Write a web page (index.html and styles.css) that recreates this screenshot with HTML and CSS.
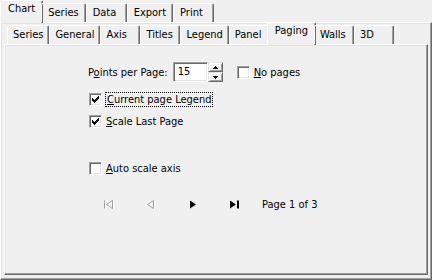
FILE: index.html
```html
<!DOCTYPE html>
<html lang="en">
<head>
  <meta charset="UTF-8">
  <title>Chart Editor - Paging</title>
  <link rel="stylesheet" href="styles.css">
</head>
<body>
  <div class="editor">
    <div class="tab-title outer">
      <span class="tab-item active">Chart</span>
      <span class="tab-item">Series</span>
      <span class="tab-item">Data</span>
      <span class="tab-item">Export</span>
      <span class="tab-item">Print</span>
    </div>
    <div class="panel outer-panel">
      <div class="tab-title inner">
        <span class="tab-item">Series</span>
        <span class="tab-item">General</span>
        <span class="tab-item">Axis</span>
        <span class="tab-item">Titles</span>
        <span class="tab-item">Legend</span>
        <span class="tab-item">Panel</span>
        <span class="tab-item active">Paging</span>
        <span class="tab-item">Walls</span>
        <span class="tab-item">3D</span>
      </div>
      <div class="panel inner-panel">
        <div class="row row-points">
          <span class="label">P<u>o</u>ints per Page:</span>
          <span class="edit">15</span>
          <span class="spin">
            <span class="spin-btn"><svg width="5" height="3" viewBox="0 0 5 3"><path d="M2 0h1v1h1v1h1v1H0V2h1V1h1z" fill="#000"/></svg></span>
            <span class="spin-btn"><svg width="5" height="3" viewBox="0 0 5 3"><path d="M0 0h5v1H4v1H3v1H2V2H1V1H0z" fill="#000"/></svg></span>
          </span>
          <label class="check no-pages"><span class="box"></span><span><u>N</u>o pages</span></label>
        </div>
        <label class="check row-legend"><span class="box checked"><svg width="7" height="7" viewBox="0 0 7 7"><path d="M0 2h1v1h1v1h1V3h1V2h1V1h1V0h1v3H6v1H5v1H4v1H3v1H2V6H1V5H0z" fill="#000"/></svg></span><span class="focus"><u>C</u>urrent page Legend</span></label>
        <label class="check row-scale"><span class="box checked"><svg width="7" height="7" viewBox="0 0 7 7"><path d="M0 2h1v1h1v1h1V3h1V2h1V1h1V0h1v3H6v1H5v1H4v1H3v1H2V6H1V5H0z" fill="#000"/></svg></span><span><u>S</u>cale Last Page</span></label>
        <label class="check row-auto"><span class="box"></span><span><u>A</u>uto scale axis</span></label>
        <div class="nav">
          <span class="nav-btn disabled">
            <svg width="11" height="9" viewBox="0 0 11 9"><path d="M1.5 0.5v8M9.5 0.5L3.5 4.5L9.5 8.5z" fill="none" stroke="#fff" transform="translate(1 1)"/><path d="M1.5 0.5v8M9.5 0.5L3.5 4.5L9.5 8.5z" fill="none" stroke="#a0a0a0"/></svg>
          </span>
          <span class="nav-btn disabled">
            <svg width="11" height="9" viewBox="0 0 11 9"><path d="M8.5 0.5L2.5 4.5L8.5 8.5z" fill="none" stroke="#fff" transform="translate(1 1)"/><path d="M8.5 0.5L2.5 4.5L8.5 8.5z" fill="none" stroke="#a0a0a0"/></svg>
          </span>
          <span class="nav-btn">
            <svg width="11" height="9" viewBox="0 0 11 9"><path d="M3 0.5L9 4.5L3 8.5z" fill="#000"/></svg>
          </span>
          <span class="nav-btn">
            <svg width="11" height="9" viewBox="0 0 11 9"><path d="M1 0.5L7 4.5L1 8.5z" fill="#000"/><rect x="8" y="0.5" width="2" height="8" fill="#000"/></svg>
          </span>
          <span class="page-info">Page 1 of 3</span>
        </div>
      </div>
    </div>
  </div>
</body>
</html>
```

FILE: styles.css
```css
body{
  margin: 0;
  background: #f0f0f0;
  font-family: "DejaVu Sans Condensed", Tahoma, "Liberation Sans", sans-serif;
  font-size: 11px;
  color: #000;
}
.editor{
  width: 432px;
  height: 280px;
  display: flex;
  flex-direction: column;
}

/* tabs */
.tab-title{
  position: relative;
  z-index: 1;
  display: flex;
  align-items: flex-end;
  height: 22px;
  padding-left: 2px;
}
.tab-title.inner{
  padding-left: 3px;
  height: 21px;
}
.tab-item{
  box-sizing: border-box;
  height: 19px;
  min-width: 41px;
  padding: 2px 6px 0 6px;
  border-top: 1px solid #fff;
  border-left: 1px solid #fff;
  border-right: 1px solid #696969;
  border-radius: 2px 2px 0 0;
  box-shadow: inset -1px 0 #a0a0a0;
  white-space: nowrap;
}
.inner .tab-item{
  min-width: 40px;
  padding-left: 5px;
  padding-right: 5px;
}
.tab-item.active,
.inner .tab-item.active{
  height: 23px;
  margin: 0 -2px -1px -2px;
  padding-top: 1px;
  padding-left: 7px;
  padding-right: 7px;
  background: #f0f0f0;
}

/* panels */
.panel{
  box-sizing: border-box;
  border-top: 1px solid #fff;
  border-left: 1px solid #fff;
  border-right: 1px solid #696969;
  border-bottom: 1px solid #696969;
  box-shadow: inset -1px -1px #a0a0a0, inset 1px 1px #e3e3e3;
}
.outer-panel{
  flex: 1;
  display: flex;
  flex-direction: column;
  padding: 0 3px 4px 3px;
}
.inner-panel{
  flex: 1;
  display: flex;
  flex-direction: column;
  padding: 17px 0 0 83px;
}

/* rows */
.row{
  display: flex;
  align-items: center;
}
.label{
  margin-right: 5px;
}
.edit{
  box-sizing: border-box;
  width: 35px;
  height: 20px;
  padding: 2px 0 0 4px;
  background: #fff;
  border-top: 1px solid #a0a0a0;
  border-left: 1px solid #a0a0a0;
  border-right: 1px solid #fff;
  border-bottom: 1px solid #fff;
  box-shadow: inset 1px 1px #696969, inset -1px -1px #e3e3e3;
}
.spin{
  display: flex;
  flex-direction: column;
  width: 15px;
  height: 20px;
}
.spin-btn{
  box-sizing: border-box;
  flex: 1;
  display: flex;
  align-items: center;
  justify-content: center;
  border-top: 1px solid #e3e3e3;
  border-left: 1px solid #e3e3e3;
  border-right: 1px solid #696969;
  border-bottom: 1px solid #696969;
  box-shadow: inset 1px 1px #fff, inset -1px -1px #a0a0a0;
}
.check{
  display: flex;
  align-items: center;
}
.box{
  box-sizing: border-box;
  width: 13px;
  height: 13px;
  margin-right: 4px;
  display: flex;
  align-items: center;
  justify-content: center;
  background: #fff;
  border-top: 1px solid #a0a0a0;
  border-left: 1px solid #a0a0a0;
  border-right: 1px solid #fff;
  border-bottom: 1px solid #fff;
  box-shadow: inset 1px 1px #696969, inset -1px -1px #e3e3e3;
}
.no-pages{
  margin-left: 14px;
}
.row-points{
  height: 20px;
}
.row-legend{
  margin-top: 11px;
  margin-left: 1px;
}
.focus{
  outline: 1px dotted #000;
  padding: 0 1px;
}
.row-scale{
  margin-top: 9px;
  margin-left: 1px;
}
.row-auto{
  margin-top: 34px;
  margin-left: 1px;
}
.nav{
  display: flex;
  align-items: center;
  margin-top: 23px;
  margin-left: 15px;
}
.nav-btn{
  display: flex;
  width: 11px;
  margin-right: 31px;
}
.page-info{
  margin-left: -9px;
  color: #000;
}
```
